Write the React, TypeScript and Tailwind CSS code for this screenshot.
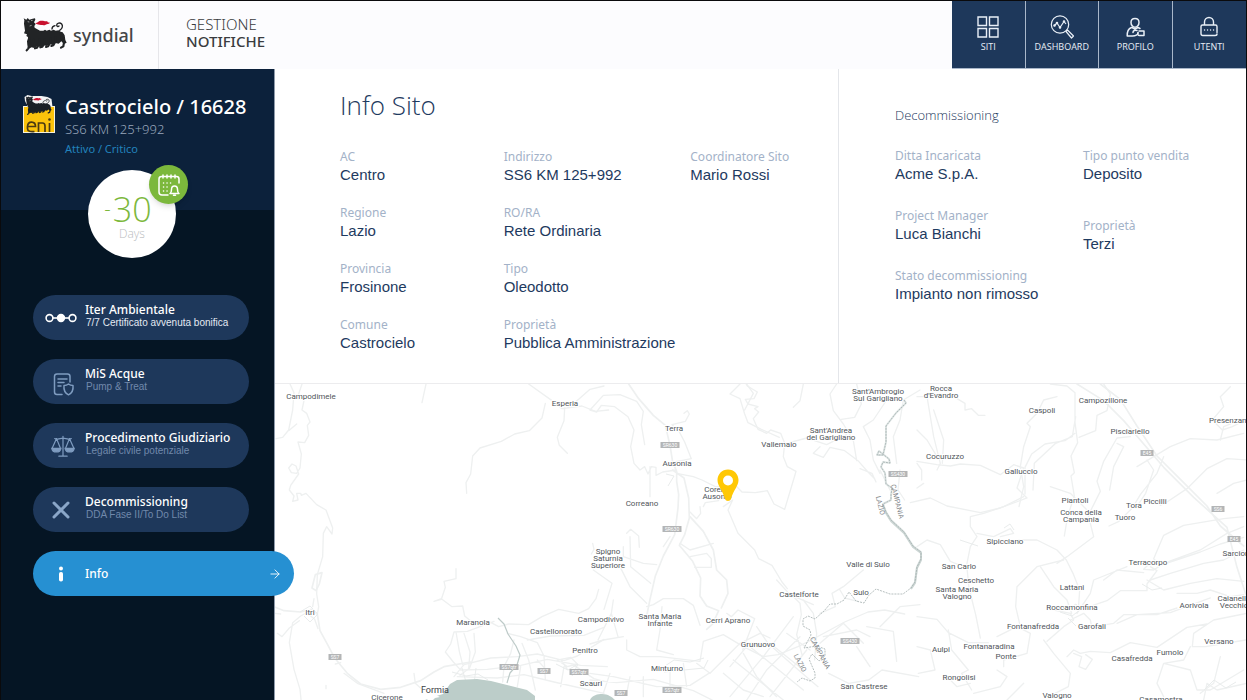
import React from "react";
import { ArrowRight } from "lucide-react";

type Entry = { label: string; value: string };

const siteColumns: Entry[][] = [
  [
    { label: "AC", value: "Centro" },
    { label: "Regione", value: "Lazio" },
    { label: "Provincia", value: "Frosinone" },
    { label: "Comune", value: "Castrocielo" },
  ],
  [
    { label: "Indirizzo", value: "SS6 KM 125+992" },
    { label: "RO/RA", value: "Rete Ordinaria" },
    { label: "Tipo", value: "Oleodotto" },
    { label: "Proprietà", value: "Pubblica Amministrazione" },
  ],
  [{ label: "Coordinatore Sito", value: "Mario Rossi" }],
];

const contractor: Entry[] = [
  { label: "Ditta Incaricata", value: "Acme S.p.A." },
  { label: "Project Manager", value: "Luca Bianchi" },
  { label: "Stato decommissioning", value: "Impianto non rimosso" },
];

const salesPoint: Entry[] = [
  { label: "Tipo punto vendita", value: "Deposito" },
  { label: "Proprietà", value: "Terzi" },
];

function Field({ label, value }: Entry) {
  return (
    <div className="whitespace-nowrap">
      <dt className="font-['Noto_Sans',sans-serif] text-[12px] leading-[18px] text-[#a3b2c8]">{label}</dt>
      <dd className="text-[15px] leading-[18px] text-[#1e3a60]">{value}</dd>
    </div>
  );
}

/* Six-legged dog, drawn on a 132 x 112 grid */
function DogShape({ ink, flame }: { ink: string; flame: string }) {
  return (
    <>
      <path
        fill={ink}
        d="M3 22l1-10-2-6 8 4 4-5 5 5 10-3 7-1 1 4-4 8 5 5-4 6 1 5 8 5 8 4 10 0 5-3 5 3 8-3 5 3 8-3 6 3 9-1 6 4 6 2 6 9 2 14 4 8-8 4-8-8-8 7-10-2-8 6-10-3-8 6-10-2-9 5-9-2-9 5-9-2-8 4-4-10-1-12 4-12-6-4 2-5-9-3 3-8z"
      />
      <g fill="none" stroke={ink} strokeWidth="6.500" strokeLinejoin="round" strokeLinecap="round">
        <path d="M18 64l2 18-4 14-5 6M32 70l-3 12-6 8M50 68l-2 14-6 12-6 2M66 68l-2 13-6 10-6 2M82 66l-1 14-6 10-6 2M98 62l-1 14-6 11-6 2M112 52l5 16 6 10-2 12-7 4" />
      </g>
      <path d="M110 42c9-5 10-14 6-19-5-5-14-3-15 3 0 4 4 6 7 3M96 28c-5 1-9 5-9 10" fill="none" stroke={ink} strokeWidth="4" strokeLinecap="round" />
      <path fill={flame} d="M36 21c8-1 10-8 20-8 8 0 10 3 17 1-1 4 2 4 8 5-4 5-9 3-13 6-5 3-9 1-14 1-6 0-11-2-18-5z" />
      <path d="M14 16l5 1M24 13l5-1M20 29l6-2" stroke="#fff" strokeWidth="1.6" />
    </>
  );
}

function SyndialDog() {
  return (
    <svg viewBox="0 0 132 112" className="h-[38px] w-[44px]" aria-hidden="true">
      <DogShape ink="#222426" flame="#c8102e" />
    </svg>
  );
}

function EniLogo() {
  return (
    <svg viewBox="0 0 32 38" className="h-[38px] w-8 shrink-0" role="img" aria-label="eni">
      <path d="M1.500 2l3-2 4 1 10 0 6 1 4 2 1 8H5L2 6z" fill="#f4f4f4" />
      <rect x="0" y="11" width="32" height="27" fill="#f6f1dc" />
      <rect x="1" y="12" width="30" height="25" fill="#fcc30b" />
      <g transform="translate(2.500 .5) scale(.2 .185)">
        <DogShape ink="#1b2026" flame="#c8102e" />
      </g>
      <g fill="none" stroke="#4b3a12" strokeWidth="1.700">
        <path d="M5 31.500h7.500c0-5.500-7.500-6-8 0v2c0 3 3 3.500 7 3M15.500 37v-9h4c2 0 2.500 1.300 2.500 3v6M26.500 28v9" />
      </g>
      <circle cx="26.500" cy="24.500" r="1.300" fill="#4b3a12" />
    </svg>
  );
}

function GridIcon() {
  return (
    <svg viewBox="0 0 24 24" className="size-6" fill="none" stroke="currentColor" strokeWidth="1.400">
      <path d="M2 2h8.500v8.500H2zM13.500 2H22v8.500h-8.500zM2 13.500h8.500V22H2zM13.500 13.500H22V22h-8.500z" />
    </svg>
  );
}

function DashboardIcon() {
  return (
    <svg viewBox="0 0 24 24" className="size-6" fill="none" stroke="currentColor" strokeWidth="1.200" strokeLinejoin="round">
      <circle cx="10" cy="9.500" r="8.700" />
      <path d="M16 16.500l1.500-1.500 6 6-2 2zM4.500 10.500l2.500-2.500 3 4.500 4-6 2 2.500" />
      <circle cx="4.500" cy="10.500" r=".7" fill="currentColor" />
      <circle cx="7" cy="8" r=".7" fill="currentColor" />
      <circle cx="10" cy="12.500" r=".7" fill="currentColor" />
      <circle cx="14" cy="6.500" r=".7" fill="currentColor" />
    </svg>
  );
}

function ProfileIcon() {
  return (
    <svg viewBox="0 0 24 24" className="size-6" fill="none" stroke="currentColor" strokeWidth="1.500" strokeLinecap="round" strokeLinejoin="round">
      <path d="M8 7.500C8 5 9.800 3.500 12 3.500S16 5 16 7.500 14.200 12.300 12 12.300 8 10 8 7.500zM8.500 12.500c-3 1.200-4.500 4-4.300 8.500h5.300c3 0 5.500-1.500 5.500-3.500" />
      <path d="M14 15.500c-2-.8-4 .2-4 2M16 16h5v4.500h-4.500c-1.500 0-2-1-1.500-2.500M9 12.500l3 1.500 3-1.500 2 1" />
    </svg>
  );
}

function LockIcon() {
  return (
    <svg viewBox="0 0 24 24" className="size-6" fill="none" stroke="currentColor" strokeWidth="1.400" strokeLinecap="round">
      <path d="M7.500 10V7a4.500 4.500 0 0 1 9 0v3M20 17.500v-6c0-1-.5-1.500-1.500-1.500h-13C4.500 10 4 10.500 4 11.500v7c0 1.200.6 2 1.800 2H18c1.200 0 2-.6 2-1.500" />
      <path d="M7.500 15h.1M10.500 15h.1M13.500 15h.1M16.500 15h.1" strokeWidth="1.300" />
    </svg>
  );
}

const navItems = [
  { text: "SITI", Icon: GridIcon },
  { text: "DASHBOARD", Icon: DashboardIcon },
  { text: "PROFILO", Icon: ProfileIcon },
  { text: "UTENTI", Icon: LockIcon },
];

function CalendarBell() {
  return (
    <svg viewBox="0 0 24 24" className="size-6" fill="none" stroke="#fff" strokeWidth="1.500" strokeLinecap="round" strokeLinejoin="round">
      <path d="M11 22H5c-1.700 0-3-1-3-3V6c0-1.700 1-2.500 2.500-2.500h15C21 3.500 22 4.500 22 6v4M6 2v3M10 2v3M14 2v3M18 2v3" />
      <path d="M6.500 10h.1M10 10h.1M13.500 10h.1M6.500 14h.1M10 14h.1M6.500 18h.1M10 18h.1" />
      <path d="M13 20.500h9c-1.500-1-1.500-2-1.500-4 0-2-1-3.500-3-3.500s-3 1.500-3 3.500c0 2 0 3-1.500 4zM16.500 22.300h2" />
    </svg>
  );
}

function StepsIcon() {
  return (
    <svg viewBox="0 0 32 12" className="h-3 w-8" fill="none" stroke="#fff" strokeWidth="1.600">
      <circle cx="4.500" cy="6" r="3.400" />
      <path d="M8 6h16" />
      <circle cx="16" cy="6" r="3.400" fill="#fff" />
      <circle cx="27.500" cy="6" r="3.400" />
    </svg>
  );
}

function DocumentShieldIcon() {
  return (
    <svg viewBox="0 0 24 24" className="ml-1 mt-1 size-6" fill="none" stroke="#7f9cc0" strokeWidth="1.500" strokeLinecap="round" strokeLinejoin="round">
      <path d="M11 22.500H6c-1.700 0-2.500-1-2.500-2.500V4.500C3.500 2.800 4.500 2 6 2h10.500C18.200 2 19 3 19 4.500V10M7 7h9M7 10.500h6M7 14h3" />
      <path d="M17.500 12c1.500 1.200 3 1.500 4.500 1.500.5 4.500-.8 7.500-4.500 9.300-3.700-1.800-5-4.800-4.500-9.300 1.500 0 3-.3 4.500-1.500z" />
    </svg>
  );
}

function ScalesIcon() {
  return (
    <svg viewBox="0 0 26 24" className="ml-1 size-6" fill="none" stroke="#7f9cc0" strokeWidth="1.300" strokeLinecap="round">
      <path d="M13 1.500v21M8.500 23h9M4 4c3 2 5-1 9 0 4-1 6 2 9 0M6 4L1.500 14M6 4l4 10M20 4l-4 10M20 4l4.500 10" />
      <path d="M.8 14.500h10c-.5 3-2.500 4-5 4s-4.500-1-5-4zM15.200 14.500h10c-.5 3-2.500 4-5 4s-4.500-1-5-4z" fill="#7f9cc0" />
    </svg>
  );
}

function CrossIcon() {
  return (
    <svg viewBox="0 0 24 24" className="size-6" stroke="#8aa6c8" strokeWidth="3" strokeLinecap="round">
      <path d="M5 5l14 14M19 5L5 19" />
    </svg>
  );
}

const menu = [
  { title: "Iter Ambientale", note: "7/7 Certificato avvenuta bonifica", Icon: StepsIcon, bright: true },
  { title: "MiS Acque", note: "Pump & Treat", Icon: DocumentShieldIcon, bright: false },
  { title: "Procedimento Giudiziario", note: "Legale civile potenziale", Icon: ScalesIcon, bright: false },
  { title: "Decommissioning", note: "DDA Fase II/To Do List", Icon: CrossIcon, bright: false },
];

/* Place names: first line's centre x and y, then the lines of text */
const places: [number, number, string[]][] = [
  [311, 396, ["Campodimele"]],
  [565, 403, ["Esperia"]],
  [310, 612, ["Itri"]],
  [473, 622, ["Maranola"]],
  [556, 631, ["Castellonorato"]],
  [585, 650, ["Penitro"]],
  [591, 683, ["Scauri"]],
  [387, 697, ["Cicerone"]],
  [674, 428, ["Terra"]],
  [677, 463, ["Ausonia"]],
  [717, 489, ["Coreno", "Ausonio"]],
  [779, 444, ["Vallemaio"]],
  [831, 430, ["Sant'Andrea", "del Garigliano"]],
  [878, 391, ["Sant'Ambrogio", "Sul Garigliano"]],
  [642, 503, ["Correano"]],
  [608, 551, ["Spigno", "Saturnia", "Superiore"]],
  [660, 616, ["Santa Maria", "Infante"]],
  [601, 619, ["Campodivivo"]],
  [728, 620, ["Cerri Aprano"]],
  [799, 594, ["Castelforte"]],
  [861, 592, ["Suio"]],
  [868, 564, ["Valle di Suio"]],
  [758, 644, ["Grunuovo"]],
  [667, 668, ["Minturno"]],
  [864, 686, ["San Castrese"]],
  [941, 388, ["Rocca", "d'Evandro"]],
  [1103, 400, ["Campozillone"]],
  [1042, 410, ["Caspoli"]],
  [1130, 431, ["Pisciariello"]],
  [1230, 420, ["Presenzano"]],
  [945, 456, ["Cocuruzzo"]],
  [1021, 471, ["Galluccio"]],
  [1075, 500, ["Piantoli"]],
  [1081, 512, ["Conca della", "Campania"]],
  [1134, 505, ["Tora"]],
  [1155, 501, ["Piccilli"]],
  [1125, 517, ["Tuoro"]],
  [1005, 541, ["Sipicciano"]],
  [959, 566, ["San Carlo"]],
  [976, 580, ["Ceschetto"]],
  [957, 589, ["Santa Maria", "Valogno"]],
  [1072, 587, ["Lattani"]],
  [1072, 607, ["Roccamonfina"]],
  [1033, 626, ["Fontanafredda"]],
  [1092, 626, ["Garofali"]],
  [1148, 562, ["Terracorpo"]],
  [1237, 553, ["Sarcioni"]],
  [1194, 605, ["Aorivola"]],
  [1234, 598, ["Caianello", "Vecchio"]],
  [941, 649, ["Aulpi"]],
  [989, 646, ["Fontanaradina"]],
  [1006, 656, ["Ponte"]],
  [1219, 641, ["Versano"]],
  [1170, 652, ["Fumolo"]],
  [1132, 658, ["Casafredda"]],
  [959, 677, ["Rongolisi"]],
  [1057, 695, ["Valogno"]],
  [1161, 699, ["Casamostra"]],
];

const shields: [number, number, string][] = [
  [335, 657, "SS7"],
  [509, 667, "SS7qtr"],
  [544, 671, "SS7"],
  [579, 672, "SS7qtr"],
  [621, 693, "SS7"],
  [672, 690, "SS7qtr"],
  [670, 445, "SR630"],
  [672, 529, "SR630"],
  [898, 474, "SS430"],
  [850, 641, "SS430"],
  [1147, 453, "E45"],
  [1218, 509, "SS6"],
  [1234, 539, "E45"],
];

function SiteMap() {
  return (
    <svg viewBox="275 384 971 316" preserveAspectRatio="xMidYMid slice" className="h-full w-full" role="img" aria-label="Mappa del sito">
      <g fill="none" stroke="#eef0f0" strokeLinejoin="round" strokeLinecap="round">
        {/* western sector */}
        <g transform="translate(274 380) scale(.33333)" strokeWidth="4">
          <path d="M48 12l12 26-4 52-12 60-18 22-20 4M68 132l-24 20M84 12l-10 30 16 20-6 28 14 10 10 26-8 10 4 30-12 22-20-2 10 36-4 42-10 16-16-2-8-14 10-12 12 6 8 24-24 34-4 14 14 18-4 16 16-4-4-20 12 0 2 6 14-6 32 34 28 16 20 54-2 18-16-22-10 20-2 70-16 54-2 58 6 38-4 24" />
          <path d="M120 600l4-16 20-6-8 34-10 20-12-8zM0 680l30 12 50 4 32-8 18 14 8 50 24 44 20 38 38 46 40 32 60 16 60-6 60-20 40-26 30-16 80-14" strokeWidth="5" />
          <path d="M112 690l-32 18-24 20-10 60 14 80 18 60 4 40M10 760l14 10 22-26 30-22M116 680l4-24M100 700l22 18 10 28M0 700l20 2M210 880l40 30 80 30M200 848l-16 4M156 916l0 10M420 880l4 30 18 16" />
          <path d="M456 12l-12 56M764 12l70 50 30 24 60-8 40 16 40-4M880 84l34-26 34-30 42-10M814 70l-10 44-38 38-44 10-40 22-64 20-22 24-6 54-14 26 2 32M872 84l-2 38-20 50 6 24 24 24" />
          <path d="M546 566l0 30-36 8 4 18-12 36-22 6 22-8 32 24 32-2 6 30 22 18 50-2 30 16 30-8 60 2 40-24 50-22 60 12 30-14 22-30 8-28M660 724l-80 30-40 2-10 36-16 24 24 30 18 20M546 756l10 58 10 40M570 760l18 56-4 50-26 20M600 760l4 56-18 50" />
          <path d="M540 890l30-36 80-20 80-4 60-8 80 20 40-14 80-50M560 870l80-2 100-12 80-18 100 18 80 4M550 890l120 4 80-10 90 22 150 34M700 760l40 10 50 18 20 40 4 70M720 780l-10 40-20 40-4 46M760 780l70-12 100-2 60-24M790 840l36 40M744 790l20 50 20 90M850 840l30 20 30-8-20-20-30 6 20 30M870 860l-10 60M900 856l60 40 30 8M740 860l-10 60" />
          <path d="M956 490l4 18-8 14" />
        </g>
        {/* central sector */}
        <g transform="translate(590 380) scale(.33333)" strokeWidth="4">
          <path d="M116 12l30 44 44 50 36 30 14 60 8 50 12 28 0 30 6 40-2 40-10 80-34 64-24 60-16 70-10 50M248 270l34 24 14 60 2 60-14 50-16 32 40 48 24 50-2 54 20 30 36 14-18 40-18 16M300 410l40 44 30 56 10 60 30 30 4 40-20 44" strokeWidth="5" />
          <path d="M0 90l20 6 14-20 40 4 40 30 18 40-10 50 10 50 18 20 14-10 10 22 10-22 14 2 0 24 20-10 40-6M0 90l40-44 50-2 50 20 20 30-6 40 10 60M180 350l0-90M282 100l10-8 6 10-12 22-40 10 20 18 18 34 20 50-50 10M260 280l50 10 26 10 40 20 60-4 20 20 40 2 36-6 20 40 32 16 30-100 4-14-26-14-12-30 4-40-12-30-30-10-12 10-26-12-14-32 16-20-12-10 10-6-30-8-8-14 26-2 10-20-30-18-8-14 12-30" />
          <path d="M400 380l28-20-14 30 30 70 50 50 12 26 40 20 30 50 16 20M340 380l6-12 40-6M330 380l2 20-12 16-20-20M110 460l12-12 24 20 2 34M10 570l56 40-24 78M100 500l0 30 60 20 40 4M120 470l2 90 60 50M90 560l30 60 50 50M240 470l-20 30M270 490l30 20 70-20M300 530l50-10 14 16 0 26-50 0" />
          <path d="M170 680l20-6 30-18 60 0 30 20 20 60M210 750l6-70M110 780l0 30 40 20 60 0 120 14 10-60 60-20 60 36 60 30 44-6 60-24 40-20 100-54 70-30 50-6 60 12M100 770l-60 10-40 12M210 750l-10 60 50 14M320 850l40 30 90-90 60-30 30 14M70 660l-6 40 20 70M64 700l-40 80M410 700l14 10 20-20 50 26-36 94M460 820l40 70 60 60M500 740l34 50 80 70 70 60" />
          <path d="M0 880l70 10 130 30 100-4 60-38M0 900l80 8 110-10 120 34 60 30M60 880l-20 60M120 890l-10 50M160 890l0 60M240 870l0 60M280 850l10 70M420 950l100-120 90-120M470 960l60-90 100-100M540 950l110-140M400 880l60 50 60 20M430 840l150 120M480 800l160 130M540 790l100 80M590 760l70 50M420 860l50-60M600 640l30 30 4 34-14 60 16 60M640 660l30 40 10 60-6 80M560 600l40 44 70 30M690 700l46-20-10-40 34-20 60-50M750 630l14 24 40 10" />
          <path d="M450 12l-30 30 30 14 14 46 10 26 40 20 54 24M470 12l20 28-26 50M640 12l-10 50-20 20M740 12l-20 30 10 50 30 40 30 50 10 60M800 12l14 60-20 40-40 6M890 60l-40 60-30 20 20 40 10 60 20 40M990 30l-50 30-10 60-20 50 10 80M590 190l60-16 60 20 60-30M690 200l-20 20 30 12 20-30 44 10 40 30 30 34 20 20M870 270l30 60M930 270l-6 60 20 30M810 266l36 14 12 26" />
          <path d="M690 790l70-60 60 60M700 770l100-20 40 20M716 880l60 30 60-10 40-30 110 20M800 800l40 60M830 740l80 14 10 90M870 740l60-60 60-6" />
        </g>
        {/* eastern sector */}
        <g transform="translate(917 380) scale(.33333)" strokeWidth="4">
          <path d="M480 12l80 50 60 60 120 140 90 90 100 90 30 120 26 80M550 12l60 46 50 80 60 90 80 80 70 70 40 60 70 60" strokeWidth="5" />
          <path d="M400 12l50 6 24 20 0 90 8 60-20 40 10 50-10 10 10 60-20 60-10 60M560 12l20 30-10 50-30 14-4 46-50 20M420 50l-40 10-20 40-30 30 10 10-20 60-10 60 10 60-14 60M474 160l-30 22-60 10-40 30-20 40 0 80M476 110l-10 60-50 20-64 60-4 80" />
          <path d="M0 50l30 0 20 120 20 80-10 20M50 90l30 90-4 70M0 150l30 30 30 50M110 50l34 20 0 20 20-4 20 20 20 0M0 244l60 10 40 4 30-6 60 4 60 28 40-30 30 10-20 60 30 30-80 30-60 14-100-20-50-24-60 14M14 300l0-30-14-20M20 310l-20 14" />
          <path d="M980 160l-80 20-80-4-60 24-100 60M990 240l-60-4-60 30-60 60-60 40-20 10M740 230l-20 50-50 64-24 40-40 40-30 14M690 240l20 30-24 70-20 30M640 170l-40 4-40 70-20 60 10 30-30 60M600 190l20 10-30 60-12 70M400 320l60 20 50 50 20 80-80 60-30 20" />
          <path d="M990 300l-40 10-50 30M980 410l-60 6-120 20-60 30-30 70 20 20 120-40 60-24 70-20M980 440l-50 20-80 50-110 40-30 20-30-2 20-20M700 600l60-20 100-30 60-10 60-30M690 600l50 30 80-20 80-14 80 8M0 500l30-20 40 14 30 50 50 20 6 60 20 80 14 70M160 410l40-10 60-20 60-30M160 410l0 30 20 30-20 30-12 60M180 460l50 10 50-24 10 14-40 10M300 480l60 0 60 30 28 30 20 40 20 50-4 60M440 540l-80 20-60 60-4 60 14 60 60 0 40-10" />
          <path d="M370 560l40 60 40 40 14 40M410 690l50 10 10 20-30 20-50 44M460 720l40-20 20 20 4 20M480 700l40-60 10-40 100-40M530 740l60-10 30-26 100 0 60-20M560 600l40-30 80 8M600 730l60-26 100-6 120-44M700 560l20 12-30 40 0 20-80 0-40 30-60 20M780 640l60 0 40-10 60 20 40-6" />
          <path d="M0 710l60 8 34 40 60 30 60 0M94 750l10 60 50 60-20 10 30 50M0 800l40 10 14 60-50 10M240 770l60-30 40 20-10 60-70 20 0 20M380 780l30 40 50 60-6 40-40 20M450 830l20-20 20 10 30-6 60 4 60-30 80 14 90-60 60-10M470 820l24 10-8 30 20 8 20-30-20-14M990 700l-100 20-60 40-4 40 40 0 120-20M820 800l-20 40-60 10-20 60 20 40M740 850l80 20 20 60 40 0 100-60M850 940l40-30 20-80M860 960l10-50 30 20 90-20M940 20l-30 30 10 30-34 40 30 30 30-10 40-20M910 180l10-40 50-20M320 910l-50 50M240 870l30 20-20 30-80 20M100 900l20 20 40-10" />
        </g>
      </g>

      {/* urban street mesh */}
      <g fill="none" stroke="#e9ecec" strokeWidth="1">
        <path d="M452 672l14 4 12-2 10 6M462 668l4 14M476 668l-2 16M556 664l12 6 10-6-6 12M1060 612l12 4 8-6-4-6-10 6M1068 618l8 8M662 668l12-8 16 2 14-4M664 672l40-4 4-8M300 612l10-6 8 8-8 8-6-6M1204 690l10-10 12 8 10-6M1142 584l10 6 10-2M1004 528l6-4 4 6M960 540l18 6M666 474l8 2-6 10" />
      </g>

      {/* sea */}
      <path d="M425 700l8-3 10-3 7-10 7-4 20-1 14 2 20 5 16 4 8 6v4z" fill="#bccdc9" />
      <path d="M434 694l6 3-5 1-2 2h-6l3-5z" fill="#fff" />
      <path d="M590 700c2-5 8-6 12-6 6 0 10 3 13 6z" fill="#bccdc9" />

      {/* rivers */}
      <g fill="none" stroke="#bdcac8" strokeWidth="1.200" strokeLinejoin="round">
        <path d="M498 618l6 6 4 10 8 12 4 9-3 10-7 8-3 10" />
        <path d="M904 400l2 3-10 10-10 13 0 16-3 13-6 0 2-4 10 8 1 4-7-1-2 5 4 6 1 11 6 4-1 7 0 5-8 4 3 8 5 8 13 12 9 14 8 6 0 7-4 8-2 15-4 6" stroke="#dfe6e5" strokeWidth="2" />
        <path d="M883 505l3 8 5 8 13 12 9 14 8 6 0 7-4 8-2 15-4 6" stroke="#ccd6d4" strokeWidth="2" />
        <path d="M904 400l2 3-10 10-10 13 0 16-3 13-6 0 2-4 10 8 1 4-7-1-2 5 4 6 1 11 6 4-1 7 0 5-8 4 3 8 5 8 13 12 9 14 8 6 0 7-4 8-2 15-4 6-8 6-13 0-14-5-7 6-5 8-8-2-7-9-5 8-7 4-7 0-6 7-9 8-7-3-5 3 0 7 7 4 1 5-7 13 13-2 8 3 0 7-6 5-7-7-3 5 6 14 0 5-5 3-8-3-5 4" stroke="#a3afaf" strokeWidth=".8" strokeDasharray="2 1" />
      </g>

      <g className="font-['Roboto',sans-serif]" fontSize="8" fill="#50555a" textAnchor="middle">
        {places.map(([x, y, lines]) => (
          <text key={lines.join(" ")} stroke="#fff" strokeWidth="2" paintOrder="stroke">
            {lines.map((line, i) => (
              <tspan key={line} x={x} y={y + 3 + i * 7}>{line}</tspan>
            ))}
          </text>
        ))}
        <text x="435" y="693" fontSize="9" fill="#3c4146">Formia</text>
        <text fill="#85898c" transform="translate(895 502) rotate(76)" fontSize="7">CAMPANIA</text>
        <text fill="#85898c" transform="translate(878 506) rotate(76)" fontSize="7">LAZIO</text>
        <text fill="#85898c" transform="translate(818 654) rotate(62)" fontSize="7">CAMPANIA</text>
        <text fill="#85898c" transform="translate(798 664) rotate(62)" fontSize="7">LAZIO</text>
      </g>

      <g className="font-['Roboto',sans-serif]" fontSize="5" textAnchor="middle">
        {shields.map(([x, y, code]) => {
          const w = code.length > 3 ? 19 : 13;
          return (
            <g key={`${x}-${y}`}>
              <rect x={x - w / 2} y={y - 3} width={w} height="6" fill="#b3b5b6" />
              <text x={x} y={y + 2} fill="#fff">{code}</text>
            </g>
          );
        })}
      </g>

      {/* site pin */}
      <path d="M728 469.500c-6 0-10.500 4.700-10.500 10.500 0 6 5 10 7.500 19 .8 2.500 5.200 2.500 6 0 2.500-9 7.500-13 7.500-19 0-5.800-4.500-10.500-10.500-10.500z" fill="#ffc805" />
      <circle cx="728" cy="480.500" r="5" fill="#fff" />
    </svg>
  );
}

export default function App() {
  return (
    <div className="flex min-h-screen flex-col border-x border-t border-[#0a0a0c] bg-white font-['Liberation_Sans',sans-serif]">
      <header className="flex h-[68px] shrink-0 bg-[#fcfcfe] font-['Noto_Sans',sans-serif]">
        <a href="#home" className="flex w-[158px] shrink-0 items-center gap-1.5 border-r border-[#e6e6ea] pl-[22px]">
          <SyndialDog />
          <span className="text-[18px] leading-6 font-medium text-[#444648]">syndial</span>
        </a>
        <div className="flex-1 pt-[15px] pl-[27px] text-[15px] leading-[17px] text-[#3a3c3f]">
          <p className="font-light">GESTIONE</p>
          <p className="font-medium">NOTIFICHE</p>
        </div>
        <nav className="grid w-[294px] shrink-0 grid-cols-4 divide-x divide-[#a9b7ca] border-b border-[#a9b7ca] bg-[#1e385b]">
          {navItems.map(({ text, Icon }) => (
            <a key={text} href={"#" + text.toLowerCase()} className="flex flex-col items-center pt-[14px] text-[#e9eff7]">
              <Icon />
              <span className="font-['Open_Sans',sans-serif] text-[9px] leading-[15px]">{text}</span>
            </a>
          ))}
        </nav>
      </header>

      <div className="flex flex-1">
        <aside className="z-10 flex w-[274px] shrink-0 flex-col border-r border-[#8f9bab] bg-[#051524]">
          <div className="flex h-[141px] flex-col bg-[#0c213b]">
            <div className="flex gap-2.5 pt-[26px] pl-[22px] font-['Noto_Sans',sans-serif] whitespace-nowrap">
              <EniLogo />
              <div>
                <h1 className="text-[20px] leading-6 font-medium text-white">Castrocielo / 16628</h1>
                <p className="text-[13px] leading-5 font-light text-[#9aa8bb]">SS6 KM 125+992</p>
                <p className="text-[11px] leading-5 text-[#2283bd]">Attivo / Critico</p>
              </div>
            </div>
            <div className="relative mt-[11px] ml-[87px] flex size-[88px] shrink-0 flex-col items-center rounded-full bg-white pt-[16px] font-['Open_Sans',sans-serif] font-light">
              <p className="flex items-center gap-0.5 pr-2 text-[#7cb83c]">
                <span className="text-[20px] leading-10">-</span>
                <span className="text-[34px] leading-[46px]">30</span>
              </p>
              <p className="-mt-1.5 text-[12px] leading-4 text-[#b9bcbe]">Days</p>
              <button type="button" aria-label="Calendario scadenze" className="absolute -top-[5px] -right-3 flex size-[39px] items-center justify-center rounded-full bg-[#7cb83c] shadow-md">
                <CalendarBell />
              </button>
            </div>
          </div>

          <nav className="flex flex-col gap-[19px] pt-[85px] pr-[25px] pb-8 pl-8">
            {menu.map(({ title, note, Icon, bright }) => (
              <button key={title} type="button" className="flex h-[45px] items-center rounded-full bg-[#1e385b] text-left whitespace-nowrap">
                <span className="flex w-[52px] shrink-0 items-center justify-center pl-1">
                  <Icon />
                </span>
                <span className="flex flex-col pb-1">
                  <span className="font-['Noto_Sans',sans-serif] text-[12px] leading-[14px] font-medium text-white">{title}</span>
                  <span className={bright ? "pl-px text-[10px] leading-3 text-[#e3eaf3]" : "pl-px text-[10px] leading-3 text-[#7189ab]"}>{note}</span>
                </span>
              </button>
            ))}
            <button type="button" className="-mr-[45px] flex h-[45px] items-center rounded-full bg-[#2690d2] pr-3 text-left text-white">
              <span className="flex w-[52px] shrink-0 justify-center pl-1">
                <svg viewBox="0 0 6 16" className="h-4 w-1.5" fill="#fff" aria-hidden="true">
                  <circle cx="3" cy="2.500" r="2" />
                  <rect x="1" y="6" width="4" height="9.500" rx="1.800" />
                </svg>
              </span>
              <span className="flex-1 font-['Noto_Sans',sans-serif] text-[12px] leading-4 font-medium">Info</span>
              <ArrowRight className="size-[14px]" strokeWidth={1.500} />
            </button>
          </nav>
        </aside>

        <main className="flex min-w-0 flex-1 flex-col">
          <div className="grid h-[315px] shrink-0 grid-cols-[564fr_407fr] border-b border-[#ececee]">
            <section className="border-r border-[#e4e6ea] pl-[65px]">
              <h2 className="pt-[18px] font-['Open_Sans',sans-serif] text-[26px] leading-9 font-light text-[#1e3a60]">Info Sito</h2>
              <dl className="grid grid-cols-[164fr_187fr_148fr] pt-[25px]">
                {siteColumns.map((column) => (
                  <div key={column[0].label} className="flex flex-col gap-5">
                    {column.map((entry) => (
                      <Field key={entry.label} {...entry} />
                    ))}
                  </div>
                ))}
              </dl>
            </section>
            <section className="pl-14">
              <h2 className="pt-9 font-['Open_Sans',sans-serif] text-[13px] leading-5 font-light text-[#1e3a60]">Decommissioning</h2>
              <dl className="grid grid-cols-[188fr_163fr] pt-[22px]">
                <div className="flex flex-col gap-6">
                  {contractor.map((entry) => (
                    <Field key={entry.label} {...entry} />
                  ))}
                </div>
                <div className="flex flex-col gap-[34px]">
                  {salesPoint.map((entry) => (
                    <Field key={entry.label} {...entry} />
                  ))}
                </div>
              </dl>
            </section>
          </div>
          <div className="relative min-h-[316px] flex-1 overflow-hidden">
            <div className="absolute inset-0">
              <SiteMap />
            </div>
          </div>
        </main>
      </div>
    </div>
  );
}
